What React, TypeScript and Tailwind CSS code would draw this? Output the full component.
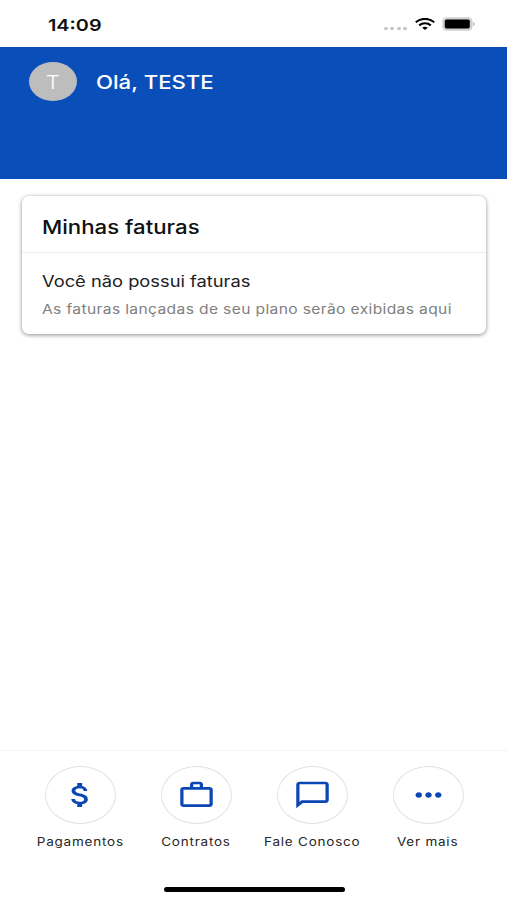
import React from 'react';

interface ActionItem {
  label: string;
  path: string;
}

const actions: ActionItem[] = [
  {
    label: 'Pagamentos',
    path: 'M11.8 10.9c-2.27-.59-3-1.2-3-2.15 0-1.09 1.01-1.85 2.7-1.85 1.78 0 2.44.85 2.5 2.1h2.21c-.07-1.72-1.12-3.3-3.21-3.81V3h-3v2.16c-1.94.42-3.5 1.68-3.5 3.61 0 2.31 1.91 3.46 4.7 4.13 2.5.6 3 1.48 3 2.41 0 .69-.49 1.79-2.7 1.79-2.06 0-2.87-.92-2.98-2.1h-2.2c.12 2.19 1.76 3.42 3.68 3.83V21h3v-2.15c1.95-.37 3.5-1.5 3.5-3.55 0-2.84-2.43-3.81-4.7-4.4z',
  },
  {
    label: 'Contratos',
    path: 'M14 6V4h-4v2h4zM4 8v11h16V8H4zm16-2c1.11 0 2 .89 2 2v11c0 1.11-.89 2-2 2H4c-1.11 0-2-.89-2-2l.01-11c0-1.11.88-2 1.99-2h4V4c0-1.11.89-2 2-2h4c1.11 0 2 .89 2 2v2h4z',
  },
  {
    label: 'Fale Conosco',
    path: 'M20 2H4c-1.1 0-2 .9-2 2v18l4-4h14c1.1 0 2-.9 2-2V4c0-1.1-.9-2-2-2zm0 14H5.17L4 17.17V4h16v12z',
  },
  {
    label: 'Ver mais',
    path: 'M6 10c-1.1 0-2 .9-2 2s.9 2 2 2 2-.9 2-2-.9-2-2-2zm12 0c-1.1 0-2 .9-2 2s.9 2 2 2 2-.9 2-2-.9-2-2-2zm-6 0c-1.1 0-2 .9-2 2s.9 2 2 2 2-.9 2-2-.9-2-2-2z',
  },
];

const StatusBar = () => (
  <div className="flex h-[47px] shrink-0 items-center justify-between pt-[2px] pr-[32px] pl-[48px]">
    <span className="origin-left scale-x-[1.2] pt-[2px] text-[16.5px] font-semibold text-[#111]">14:09</span>
    <div className="flex items-center">
      <div className="mt-[8px] mr-[8px] flex gap-[2.4px]">
        <i className="h-[3px] w-[4px] rounded-full bg-[#c4c4c4]" />
        <i className="h-[3px] w-[4px] rounded-full bg-[#c4c4c4]" />
        <i className="h-[3px] w-[4px] rounded-full bg-[#c4c4c4]" />
        <i className="h-[3px] w-[4px] rounded-full bg-[#c4c4c4]" />
      </div>
      <svg className="mr-[7px] mb-px h-[12px] w-[20px]" viewBox="0 0 20 12" fill="none" stroke="#000" strokeWidth="2.1">
        <path d="M.8 4.3C5.8-.2 14.2-.2 19.2 4.3" />
        <path d="M4.2 7.4c3.3-2.8 8.3-2.8 11.6 0" />
        <path d="M7.2 9.8c1.6-1.5 4-1.5 5.6 0L10 12z" fill="#000" stroke="none" />
      </svg>
      <svg className="mb-px h-[14px] w-[33px]" viewBox="0 0 33 14">
        <rect x=".3" y=".3" width="30.2" height="13.4" rx="4.5" fill="#cfcfcf" />
        <rect x="2.8" y="2.5" width="25" height="9" rx="1.8" fill="#000" />
        <path d="M31.2 5c1.8.6 1.8 3.4 0 4z" fill="#aaa" />
      </svg>
    </div>
  </div>
);

const Header = () => (
  <header className="h-[132px] shrink-0 bg-[#0a4fb9] pt-[15px] pl-[29px]">
    <div className="flex items-center">
      <div className="flex h-[39px] w-[48px] items-center justify-center rounded-[50%] bg-[#bdbdbd]">
        <span className="scale-x-[1.2] pt-[2px] text-[18.5px] font-light text-white">T</span>
      </div>
      <span className="ml-[18.5px] origin-left scale-x-[1.2] pt-[2px] text-[18.5px] font-medium text-white">Olá, TESTE</span>
    </div>
  </header>
);

const InvoiceCard = () => (
  <section className="mt-[17px] mr-[21px] ml-[22px] h-[138px] rounded-[7px] bg-white shadow-[0_1px_4px_rgba(0,0,0,0.45)]">
    <div className="flex h-[57px] items-center border-b border-[#eeeeee] pt-[8px] pl-[19.5px]">
      <h1 className="origin-left scale-x-[1.2] text-[18.5px] font-medium whitespace-nowrap text-[#111]">Minhas faturas</h1>
    </div>
    <div className="flex flex-col items-start pt-[17px] pl-[19.5px] whitespace-nowrap">
      <p className="origin-left scale-x-[1.2] text-[15.25px] leading-[24px] text-[#212121]">Você não possui faturas</p>
      <p className="mt-[3px] origin-left scale-x-[1.2] text-[13px] leading-[24px] tracking-[0.3px] text-[#808080]">
        As faturas lançadas de seu plano serão exibidas aqui
      </p>
    </div>
  </section>
);

const BottomActions = () => (
  <nav className="flex h-[150px] shrink-0 flex-col items-center border-t border-[#f4f4f4] pl-px">
    <div className="grid w-[464px] grid-cols-4 pt-[15px]">
      {actions.map((item) => (
        <div key={item.label} className="flex flex-col items-center">
          <div className="flex h-[58px] w-[71px] items-center justify-center rounded-[50%] border border-[#e2e2e2]">
            <svg className="h-[32px] w-[39px] shrink-0" viewBox="0 0 24 24" preserveAspectRatio="none" fill="#0a46b4">
              <path d={item.path} />
            </svg>
          </div>
          <span className="mt-[9px] scale-x-[1.2] text-[11.25px] leading-[18px] tracking-[0.65px] whitespace-nowrap text-[#262626]">
            {item.label}
          </span>
        </div>
      ))}
    </div>
    <div className="mt-auto mb-[8px] h-[5px] w-[181px] rounded-full bg-black" />
  </nav>
);

export default function App() {
  return (
    <div className="flex h-[900px] w-[507px] flex-col overflow-hidden bg-white font-['Inter','Liberation_Sans',sans-serif]">
      <StatusBar />
      <Header />
      <main className="flex-1">
        <InvoiceCard />
      </main>
      <BottomActions />
    </div>
  );
}
